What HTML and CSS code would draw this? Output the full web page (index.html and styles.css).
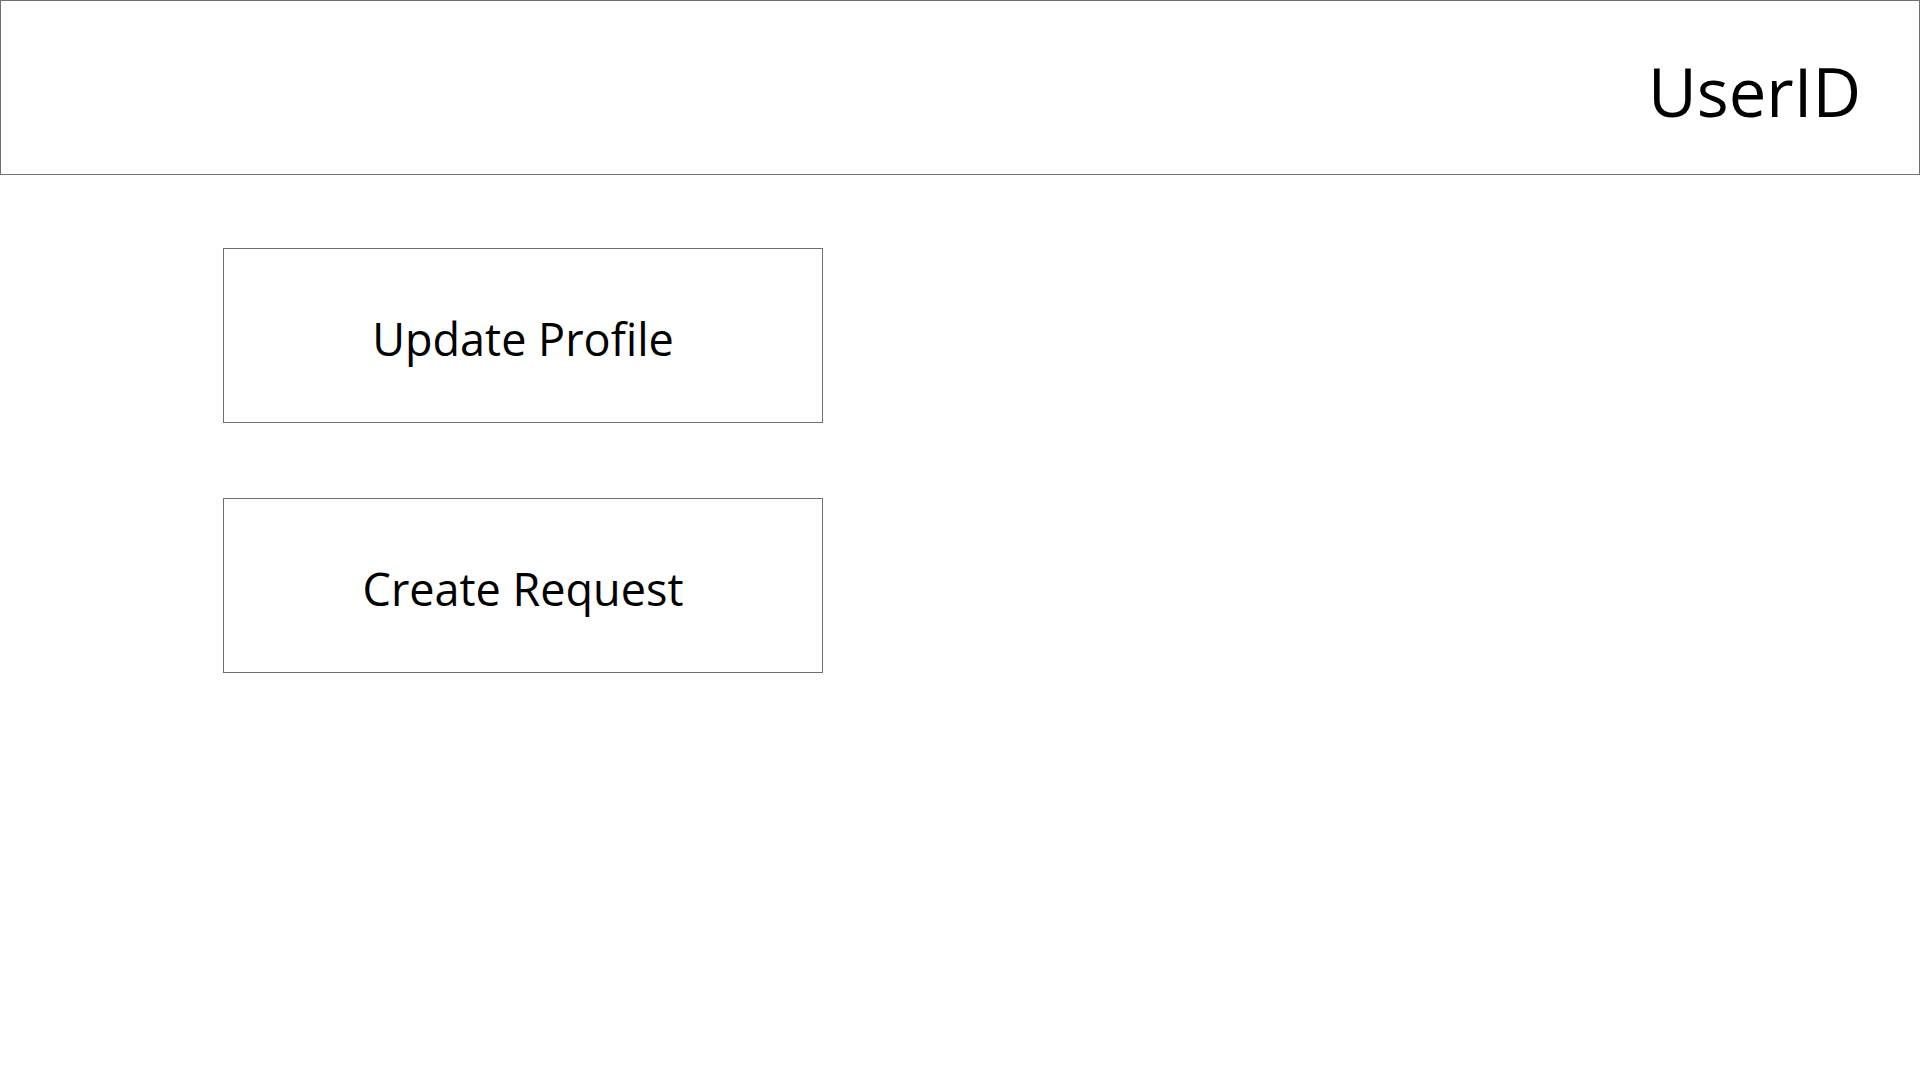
FILE: index.html
```html
<!DOCTYPE html>
<html>
<head>
<meta charset="utf-8">
<link rel="stylesheet" href="styles.css">
</head>
<body>
<header class="topbar">
  <div class="user-id">UserID</div>
</header>
<main class="actions">
  <div class="action-btn">Update Profile</div>
  <div class="action-btn">Create Request</div>
</main>
</body>
</html>
```

FILE: styles.css
```css
html, body {
  margin: 0;
  padding: 0;
  background: #ffffff;
}
body {
  font-family: "Open Sans", "Noto Sans", sans-serif;
  color: #000000;
  width: 1920px;
  height: 1080px;
  overflow: hidden;
}
.topbar {
  box-sizing: border-box;
  height: 175px;
  border: 1px solid #707070;
  display: flex;
  justify-content: flex-end;
  align-items: center;
  padding-right: 58px;
}
.user-id {
  font-size: 67px;
  line-height: 1;
  padding-top: 8px;
}
.actions {
  display: flex;
  flex-direction: column;
  gap: 75px;
  padding: 73px 0 0 223px;
}
.action-btn {
  box-sizing: border-box;
  width: 600px;
  height: 175px;
  border: 1px solid #707070;
  display: flex;
  align-items: center;
  justify-content: center;
  font-size: 45px;
  padding-top: 6px;
}
```
